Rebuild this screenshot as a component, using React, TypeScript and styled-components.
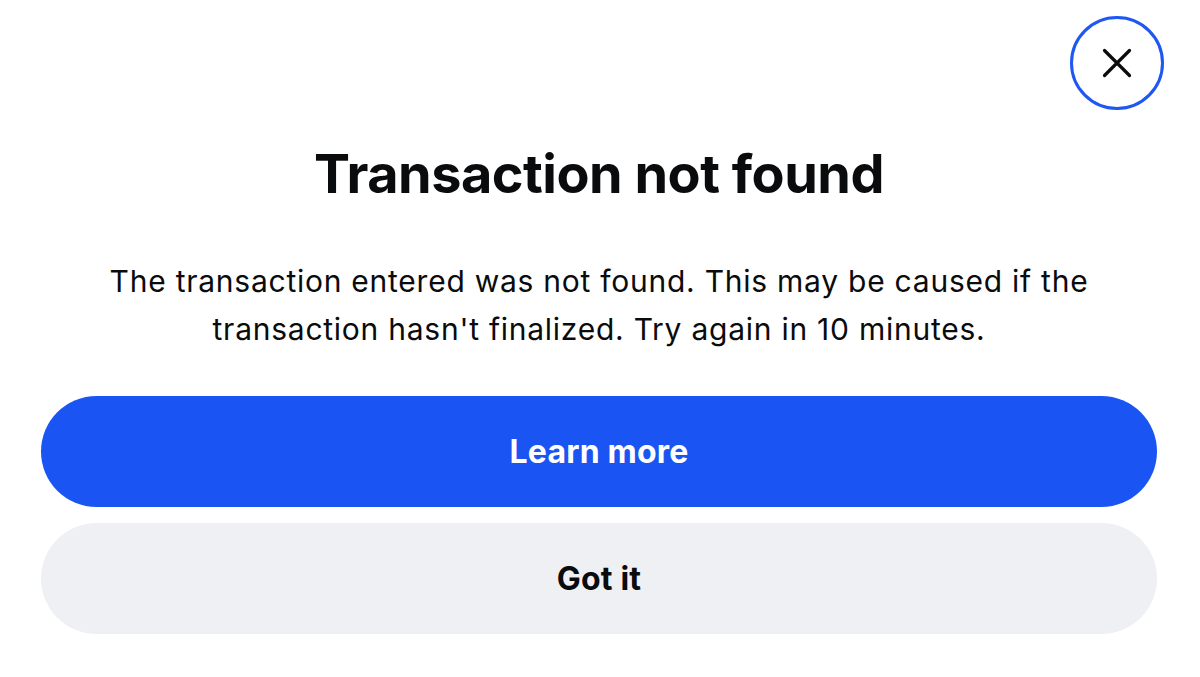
import React from "react";
import styled, { createGlobalStyle } from "styled-components";

const Global = createGlobalStyle`
  html, body { margin: 0; padding: 0; background: #ffffff; }
  body { font-family: Inter, "Noto Sans", sans-serif; -webkit-font-smoothing: antialiased; }
`;

const Page = styled.div`
  width: 1200px;
  height: 677px;
  box-sizing: border-box;
  padding: 16px 36px 0 41px;
  display: flex;
  flex-direction: column;
`;

const TopBar = styled.div`
  display: flex;
  justify-content: flex-end;
`;

const CloseButton = styled.button`
  width: 94px;
  height: 94px;
  border-radius: 50%;
  border: 3px solid #1f57f2;
  background: #fff;
  display: flex;
  align-items: center;
  justify-content: center;
  padding: 0;
  cursor: pointer;
`;

const Content = styled.div`
  display: flex;
  flex-direction: column;
  align-items: center;
  padding-right: 7px;
`;

const Title = styled.h1`
  margin: 28px 0 0;
  font-size: 54px;
  line-height: 72px;
  font-weight: 700;
  letter-spacing: -0.5px;
  color: #0a0b0d;
  text-align: center;
`;

const Body = styled.p`
  margin: 47px 0 0;
  font-size: 30px;
  line-height: 48px;
  font-weight: 400;
  color: #0a0b0d;
  text-align: center;
  letter-spacing: 0.75px;
`;

const Actions = styled.div`
  align-self: stretch;
  display: flex;
  flex-direction: column;
  gap: 16px;
  margin-top: 43px;
`;

const ActionButton = styled.button<{ $variant: "primary" | "secondary" }>`
  height: 111px;
  border-radius: 56px;
  border: none;
  font-family: Inter, "Noto Sans", sans-serif;
  font-size: 32px;
  font-weight: 700;
  letter-spacing: 0.2px;
  background: ${(p) => (p.$variant === "primary" ? "#1a55f3" : "#eef0f3")};
  color: ${(p) => (p.$variant === "primary" ? "#ffffff" : "#0a0b0d")};
  cursor: pointer;
`;

export default function App() {
  return (
    <>
      <Global />
      <Page>
        <TopBar>
          <CloseButton aria-label="Close">
            <svg width="30" height="30" viewBox="0 0 30 30" fill="none">
              <path d="M2.5 2.5 L27.5 27.5 M27.5 2.5 L2.5 27.5" stroke="#0a0b0d" strokeWidth="3.2" strokeLinecap="round" />
            </svg>
          </CloseButton>
        </TopBar>
        <Content>
          <Title>Transaction not found</Title>
          <Body>
            The transaction entered was not found. This may be caused if the
            <br />
            transaction hasn't finalized. Try again in 10 minutes.
          </Body>
          <Actions>
            <ActionButton $variant="primary">Learn more</ActionButton>
            <ActionButton $variant="secondary">Got it</ActionButton>
          </Actions>
        </Content>
      </Page>
    </>
  );
}
